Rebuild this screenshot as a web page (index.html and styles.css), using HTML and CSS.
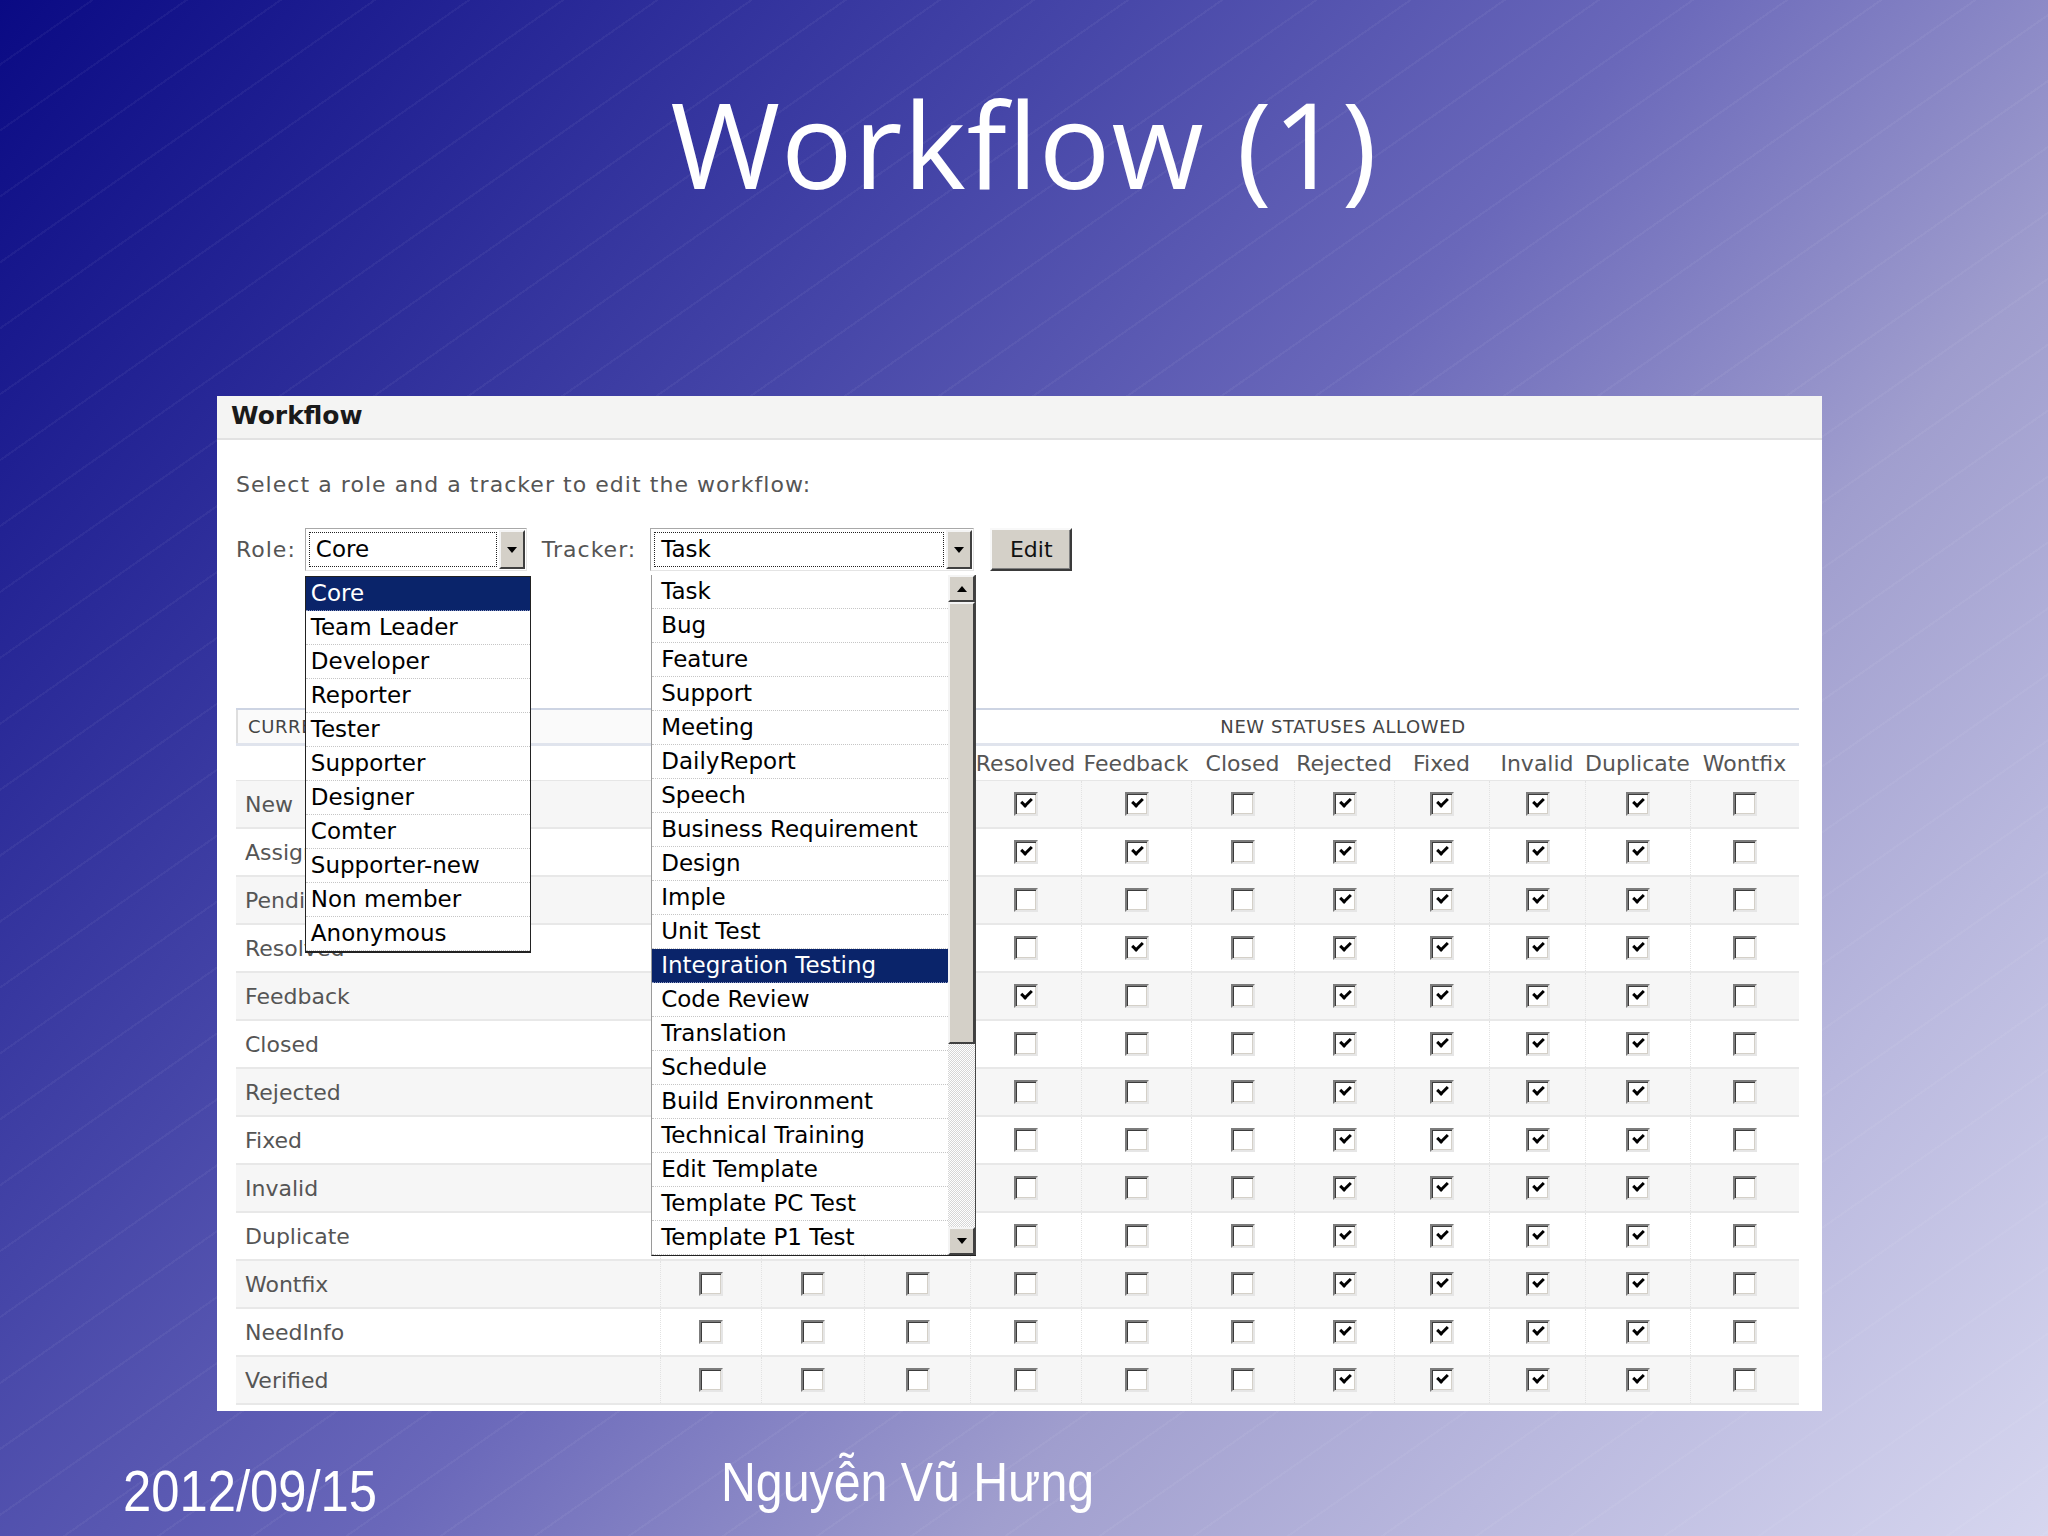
FILE: index.html
```html
<!DOCTYPE html>
<html lang="en">
<head>
<meta charset="utf-8">
<title>Workflow (1)</title>
<link rel="stylesheet" href="styles.css">
</head>
<body>
<div class="slide">
  <h1 class="title">Workflow (1)</h1>

  <div class="panel">
    <div class="panel-head">Workflow</div>
    <div class="panel-body">
      <p class="intro">Select a role and a tracker to edit the workflow:</p>

      <div class="filters">
        <span class="lbl lbl-role">Role:</span>
        <div class="select role-select">
          <span class="sel-value">Core</span>
          <span class="sel-btn"><span class="tri-down"></span></span>
          <ul class="droplist role-list">
            <li class="hl">Core</li>
            <li>Team Leader</li>
            <li>Developer</li>
            <li>Reporter</li>
            <li>Tester</li>
            <li>Supporter</li>
            <li>Designer</li>
            <li>Comter</li>
            <li>Supporter-new</li>
            <li>Non member</li>
            <li>Anonymous</li>
          </ul>
        </div>

        <span class="lbl lbl-tracker">Tracker:</span>
        <div class="select tracker-select">
          <span class="sel-value">Task</span>
          <span class="sel-btn"><span class="tri-down"></span></span>
          <div class="droplist tracker-list">
            <ul class="items">
              <li>Task</li>
              <li>Bug</li>
              <li>Feature</li>
              <li>Support</li>
              <li>Meeting</li>
              <li>DailyReport</li>
              <li>Speech</li>
              <li>Business Requirement</li>
              <li>Design</li>
              <li>Imple</li>
              <li>Unit Test</li>
              <li class="hl">Integration Testing</li>
              <li>Code Review</li>
              <li>Translation</li>
              <li>Schedule</li>
              <li>Build Environment</li>
              <li>Technical Training</li>
              <li>Edit Template</li>
              <li>Template PC Test</li>
              <li>Template P1 Test</li>
            </ul>
            <div class="scrollbar">
              <span class="sb-btn"><span class="tri-up"></span></span>
              <span class="sb-thumb"></span>
              <span class="sb-track"></span>
              <span class="sb-btn sb-down"><span class="tri-down"></span></span>
            </div>
          </div>
        </div>

        <button class="btn" type="button">Edit</button>
      </div>

      <div class="wf-table">
        <div class="hrow1">
          <div class="th-cur">CURRENT STATUS</div>
          <div class="th-new">NEW STATUSES ALLOWED</div>
        </div>
        <div class="grid hrow2">
          <span></span><span>New</span><span>Assigned</span><span>Pending</span><span>Resolved</span><span>Feedback</span><span>Closed</span><span>Rejected</span><span>Fixed</span><span>Invalid</span><span>Duplicate</span><span>Wontfix</span>
        </div>

        <div class="grid row odd"><span class="name">New</span>
          <span class="c"><i class="cb"></i></span><span class="c"><i class="cb on"></i></span><span class="c"><i class="cb on"></i></span><span class="c"><i class="cb on"></i></span><span class="c"><i class="cb on"></i></span><span class="c"><i class="cb"></i></span><span class="c"><i class="cb on"></i></span><span class="c"><i class="cb on"></i></span><span class="c"><i class="cb on"></i></span><span class="c"><i class="cb on"></i></span><span class="c"><i class="cb"></i></span>
        </div>
        <div class="grid row"><span class="name">Assigned</span>
          <span class="c"><i class="cb"></i></span><span class="c"><i class="cb"></i></span><span class="c"><i class="cb on"></i></span><span class="c"><i class="cb on"></i></span><span class="c"><i class="cb on"></i></span><span class="c"><i class="cb"></i></span><span class="c"><i class="cb on"></i></span><span class="c"><i class="cb on"></i></span><span class="c"><i class="cb on"></i></span><span class="c"><i class="cb on"></i></span><span class="c"><i class="cb"></i></span>
        </div>
        <div class="grid row odd"><span class="name">Pending</span>
          <span class="c"><i class="cb"></i></span><span class="c"><i class="cb on"></i></span><span class="c"><i class="cb"></i></span><span class="c"><i class="cb"></i></span><span class="c"><i class="cb"></i></span><span class="c"><i class="cb"></i></span><span class="c"><i class="cb on"></i></span><span class="c"><i class="cb on"></i></span><span class="c"><i class="cb on"></i></span><span class="c"><i class="cb on"></i></span><span class="c"><i class="cb"></i></span>
        </div>
        <div class="grid row"><span class="name">Resolved</span>
          <span class="c"><i class="cb"></i></span><span class="c"><i class="cb on"></i></span><span class="c"><i class="cb"></i></span><span class="c"><i class="cb"></i></span><span class="c"><i class="cb on"></i></span><span class="c"><i class="cb"></i></span><span class="c"><i class="cb on"></i></span><span class="c"><i class="cb on"></i></span><span class="c"><i class="cb on"></i></span><span class="c"><i class="cb on"></i></span><span class="c"><i class="cb"></i></span>
        </div>
        <div class="grid row odd"><span class="name">Feedback</span>
          <span class="c"><i class="cb"></i></span><span class="c"><i class="cb on"></i></span><span class="c"><i class="cb"></i></span><span class="c"><i class="cb on"></i></span><span class="c"><i class="cb"></i></span><span class="c"><i class="cb"></i></span><span class="c"><i class="cb on"></i></span><span class="c"><i class="cb on"></i></span><span class="c"><i class="cb on"></i></span><span class="c"><i class="cb on"></i></span><span class="c"><i class="cb"></i></span>
        </div>
        <div class="grid row"><span class="name">Closed</span>
          <span class="c"><i class="cb"></i></span><span class="c"><i class="cb on"></i></span><span class="c"><i class="cb"></i></span><span class="c"><i class="cb"></i></span><span class="c"><i class="cb"></i></span><span class="c"><i class="cb"></i></span><span class="c"><i class="cb on"></i></span><span class="c"><i class="cb on"></i></span><span class="c"><i class="cb on"></i></span><span class="c"><i class="cb on"></i></span><span class="c"><i class="cb"></i></span>
        </div>
        <div class="grid row odd"><span class="name">Rejected</span>
          <span class="c"><i class="cb"></i></span><span class="c"><i class="cb on"></i></span><span class="c"><i class="cb"></i></span><span class="c"><i class="cb"></i></span><span class="c"><i class="cb"></i></span><span class="c"><i class="cb"></i></span><span class="c"><i class="cb on"></i></span><span class="c"><i class="cb on"></i></span><span class="c"><i class="cb on"></i></span><span class="c"><i class="cb on"></i></span><span class="c"><i class="cb"></i></span>
        </div>
        <div class="grid row"><span class="name">Fixed</span>
          <span class="c"><i class="cb"></i></span><span class="c"><i class="cb on"></i></span><span class="c"><i class="cb"></i></span><span class="c"><i class="cb"></i></span><span class="c"><i class="cb"></i></span><span class="c"><i class="cb"></i></span><span class="c"><i class="cb on"></i></span><span class="c"><i class="cb on"></i></span><span class="c"><i class="cb on"></i></span><span class="c"><i class="cb on"></i></span><span class="c"><i class="cb"></i></span>
        </div>
        <div class="grid row odd"><span class="name">Invalid</span>
          <span class="c"><i class="cb"></i></span><span class="c"><i class="cb on"></i></span><span class="c"><i class="cb"></i></span><span class="c"><i class="cb"></i></span><span class="c"><i class="cb"></i></span><span class="c"><i class="cb"></i></span><span class="c"><i class="cb on"></i></span><span class="c"><i class="cb on"></i></span><span class="c"><i class="cb on"></i></span><span class="c"><i class="cb on"></i></span><span class="c"><i class="cb"></i></span>
        </div>
        <div class="grid row"><span class="name">Duplicate</span>
          <span class="c"><i class="cb"></i></span><span class="c"><i class="cb on"></i></span><span class="c"><i class="cb"></i></span><span class="c"><i class="cb"></i></span><span class="c"><i class="cb"></i></span><span class="c"><i class="cb"></i></span><span class="c"><i class="cb on"></i></span><span class="c"><i class="cb on"></i></span><span class="c"><i class="cb on"></i></span><span class="c"><i class="cb on"></i></span><span class="c"><i class="cb"></i></span>
        </div>
        <div class="grid row odd"><span class="name">Wontfix</span>
          <span class="c"><i class="cb"></i></span><span class="c"><i class="cb"></i></span><span class="c"><i class="cb"></i></span><span class="c"><i class="cb"></i></span><span class="c"><i class="cb"></i></span><span class="c"><i class="cb"></i></span><span class="c"><i class="cb on"></i></span><span class="c"><i class="cb on"></i></span><span class="c"><i class="cb on"></i></span><span class="c"><i class="cb on"></i></span><span class="c"><i class="cb"></i></span>
        </div>
        <div class="grid row"><span class="name">NeedInfo</span>
          <span class="c"><i class="cb"></i></span><span class="c"><i class="cb"></i></span><span class="c"><i class="cb"></i></span><span class="c"><i class="cb"></i></span><span class="c"><i class="cb"></i></span><span class="c"><i class="cb"></i></span><span class="c"><i class="cb on"></i></span><span class="c"><i class="cb on"></i></span><span class="c"><i class="cb on"></i></span><span class="c"><i class="cb on"></i></span><span class="c"><i class="cb"></i></span>
        </div>
        <div class="grid row odd"><span class="name">Verified</span>
          <span class="c"><i class="cb"></i></span><span class="c"><i class="cb"></i></span><span class="c"><i class="cb"></i></span><span class="c"><i class="cb"></i></span><span class="c"><i class="cb"></i></span><span class="c"><i class="cb"></i></span><span class="c"><i class="cb on"></i></span><span class="c"><i class="cb on"></i></span><span class="c"><i class="cb on"></i></span><span class="c"><i class="cb on"></i></span><span class="c"><i class="cb"></i></span>
        </div>
      </div>
    </div>
  </div>

  <div class="footer">
    <span class="date">2012/09/15</span>
    <span class="author">Nguyễn Vũ Hưng</span>
  </div>
</div>
</body>
</html>
```

FILE: styles.css
```css
html, body {
  margin: 0;
  padding: 0;
}

body {
  width: 2048px;
  height: 1536px;
  overflow: hidden;
  font-family: "DejaVu Sans", Verdana, sans-serif;
  background:
    repeating-linear-gradient(145deg, rgba(255,255,255,0) 0 52px, rgba(255,255,255,0.045) 52px 54px),
    linear-gradient(130deg, #0a0a84 0%, #2a2a98 18%, #4646a8 33%, #6a68ba 50%, #a09ece 68%, #b9b8de 82%, #d6d6ef 100%);
}

.slide {
  display: flex;
  flex-direction: column;
  height: 1536px;
}

/* ---------- title ---------- */
.title {
  margin: 84px 0 0;
  height: 119px;
  line-height: 119px;
  font-family: "Open Sans", sans-serif;
  font-weight: 400;
  font-size: 119px;
  letter-spacing: 1px;
  color: #fff;
  text-align: center;
  white-space: nowrap;
}

/* ---------- panel ---------- */
.panel {
  margin: 193px 0 0 217px;
  width: 1605px;
  height: 1015px;
  background: #fff;
  flex: none;
}

.panel-head {
  height: 44px;
  box-sizing: border-box;
  background: #f4f4f3;
  border-bottom: 2px solid #e2e2e2;
  padding-left: 14px;
  font-weight: bold;
  font-size: 25px;
  line-height: 40px;
  color: #1a1a1a;
}

.panel-body {
  padding-left: 19px;
}

.intro {
  margin: 30px 0 0;
  height: 30px;
  line-height: 30px;
  font-size: 22px;
  letter-spacing: 1.05px;
  color: #555;
}

/* ---------- filters ---------- */
.filters {
  margin-top: 28px;
  height: 43px;
  display: flex;
  align-items: center;
}

.lbl {
  font-size: 22px;
  letter-spacing: 1px;
  color: #555;
  margin-right: 14px;
}

.lbl-role {
  margin-right: 9px;
}

.lbl-tracker {
  margin-left: 15px;
}

.select {
  position: relative;
  height: 43px;
  box-sizing: border-box;
  background: #fff;
  border: 1px solid;
  border-color: #a8a8a8 #e4e4e4 #e4e4e4 #a8a8a8;
  display: flex;
}

.role-select { width: 222px; }
.tracker-select { width: 324px; }

.sel-value {
  flex: 1;
  margin: 3px 2px 3px 3px;
  border: 1px dotted #222;
  padding-left: 6px;
  font-size: 23px;
  line-height: 33px;
  color: #000;
}

.sel-btn {
  width: 26px;
  margin: 1px 1px 1px 0;
  box-sizing: border-box;
  background: #d4d0c8;
  border: 2px solid;
  border-color: #f4f4f4 #404040 #404040 #f4f4f4;
  display: flex;
  align-items: center;
  justify-content: center;
}

.tri-down {
  width: 0;
  height: 0;
  border-left: 5px solid transparent;
  border-right: 5px solid transparent;
  border-top: 6px solid #000;
}

.tri-up {
  width: 0;
  height: 0;
  border-left: 5px solid transparent;
  border-right: 5px solid transparent;
  border-bottom: 6px solid #000;
}

.btn {
  margin-left: 16px;
  width: 82px;
  height: 43px;
  padding: 0;
  background: #d4d0c8;
  border: 2px solid;
  border-color: #f8f8f8 #3a3a3a #3a3a3a #f8f8f8;
  box-shadow: inset -1px -1px #808080;
  font-family: "DejaVu Sans", Verdana, sans-serif;
  font-size: 22px;
  color: #111;
}

/* ---------- drop lists ---------- */
.droplist {
  position: absolute;
  z-index: 10;
  margin: 0;
  padding: 0;
  list-style: none;
  background: #fff;
  box-sizing: border-box;
}

.droplist li,
.items li {
  height: 34px;
  box-sizing: border-box;
  border-bottom: 1px dotted #c6c6c6;
  font-size: 23px;
  line-height: 33px;
  color: #000;
  white-space: nowrap;
}

.droplist li.hl,
.items li.hl {
  background: #0a246a;
  color: #fff;
  border-bottom: 1px dotted #8a96c0;
}

.role-list {
  top: 47px;
  left: -1px;
  width: 226px;
  border: 1px solid #222;
  border-bottom-width: 2px;
}

.role-list li {
  padding-left: 5px;
}

.tracker-list {
  top: 46px;
  left: 0;
  width: 325px;
  height: 681px;
  display: flex;
  border-left: 1px solid #9a9a9a;
  border-bottom: 1px solid #222;
}

.items {
  flex: 1;
  margin: 0;
  padding: 0;
  list-style: none;
}

.items li {
  padding-left: 9px;
}

.scrollbar {
  width: 28px;
  display: flex;
  flex-direction: column;
  border-right: 1px solid #444;
  box-sizing: border-box;
}

.sb-btn {
  height: 27px;
  box-sizing: border-box;
  background: #d4d0c8;
  border: 2px solid;
  border-color: #f4f4f4 #404040 #404040 #f4f4f4;
  display: flex;
  align-items: center;
  justify-content: center;
  flex: none;
}

.sb-down {
  height: 28px;
}

.sb-thumb {
  height: 442px;
  box-sizing: border-box;
  background: #d4d0c8;
  border: 2px solid;
  border-color: #f4f4f4 #404040 #404040 #f4f4f4;
  flex: none;
}

.sb-track {
  flex: 1;
  background: repeating-conic-gradient(#d6d6d6 0% 25%, #ffffff 0% 50%) 0 0 / 2px 2px;
}

/* ---------- workflow table ---------- */
.wf-table {
  margin-top: 137px;
  width: 1563px;
}

.grid {
  display: grid;
  grid-template-columns: 424px 101px 103px 106px 111px 110px 103px 100px 95px 96px 105px 109px;
}

.hrow1 {
  display: grid;
  grid-template-columns: 424px 1139px;
  height: 38px;
  box-sizing: border-box;
  border-top: 2px solid #cdd4e3;
  border-bottom: 3px solid #e0e4ed;
}

.th-cur {
  display: flex;
  align-items: center;
  padding-left: 10px;
  background: #fafafa;
  border-left: 2px solid #dedede;
  font-size: 18px;
  letter-spacing: 0.6px;
  color: #444;
  white-space: nowrap;
}

.th-new {
  display: flex;
  align-items: center;
  justify-content: center;
  padding-left: 227px;
  font-size: 18px;
  letter-spacing: 0.6px;
  color: #444;
  white-space: nowrap;
}

.hrow2 {
  height: 35px;
  box-sizing: border-box;
  border-bottom: 1px solid #e6e6e6;
  align-items: center;
  justify-items: center;
  font-size: 22px;
  color: #555;
  white-space: nowrap;
}

.row {
  height: 48px;
  box-sizing: border-box;
  border-bottom: 2px solid #e8e8e8;
  background: #fff;
}

.row.odd {
  background: #f6f6f6;
}

.name {
  display: flex;
  align-items: center;
  padding-left: 9px;
  font-size: 22px;
  color: #555;
}

.c {
  display: flex;
  align-items: center;
  justify-content: center;
  border-left: 1px dotted #e2e2e2;
}

.cb {
  position: relative;
  display: block;
  width: 24px;
  height: 24px;
  box-sizing: border-box;
  background: #fff;
  border: 2px solid;
  border-color: #7c7c7c #e6e6e6 #e6e6e6 #7c7c7c;
  box-shadow: inset 1px 1px #3c3c3c, inset -1px -1px #d4d0c8;
}

.cb.on::after {
  content: "";
  position: absolute;
  left: 7px;
  top: 2px;
  width: 4px;
  height: 8px;
  border: solid #000;
  border-width: 0 3.5px 3.5px 0;
  transform: rotate(45deg);
}

/* ---------- footer ---------- */
.footer {
  margin-top: 43px;
  display: flex;
  align-items: flex-start;
  color: #fff;
  font-family: "Liberation Sans", Arial, sans-serif;
  white-space: nowrap;
}

.date {
  display: block;
  margin-left: 123px;
  margin-top: 8px;
  width: 598px;
  font-size: 58px;
  line-height: 58px;
  transform: scaleX(0.875);
  transform-origin: left top;
}

.author {
  display: block;
  font-size: 56px;
  line-height: 56px;
  transform: scaleX(0.862);
  transform-origin: left top;
}
```
